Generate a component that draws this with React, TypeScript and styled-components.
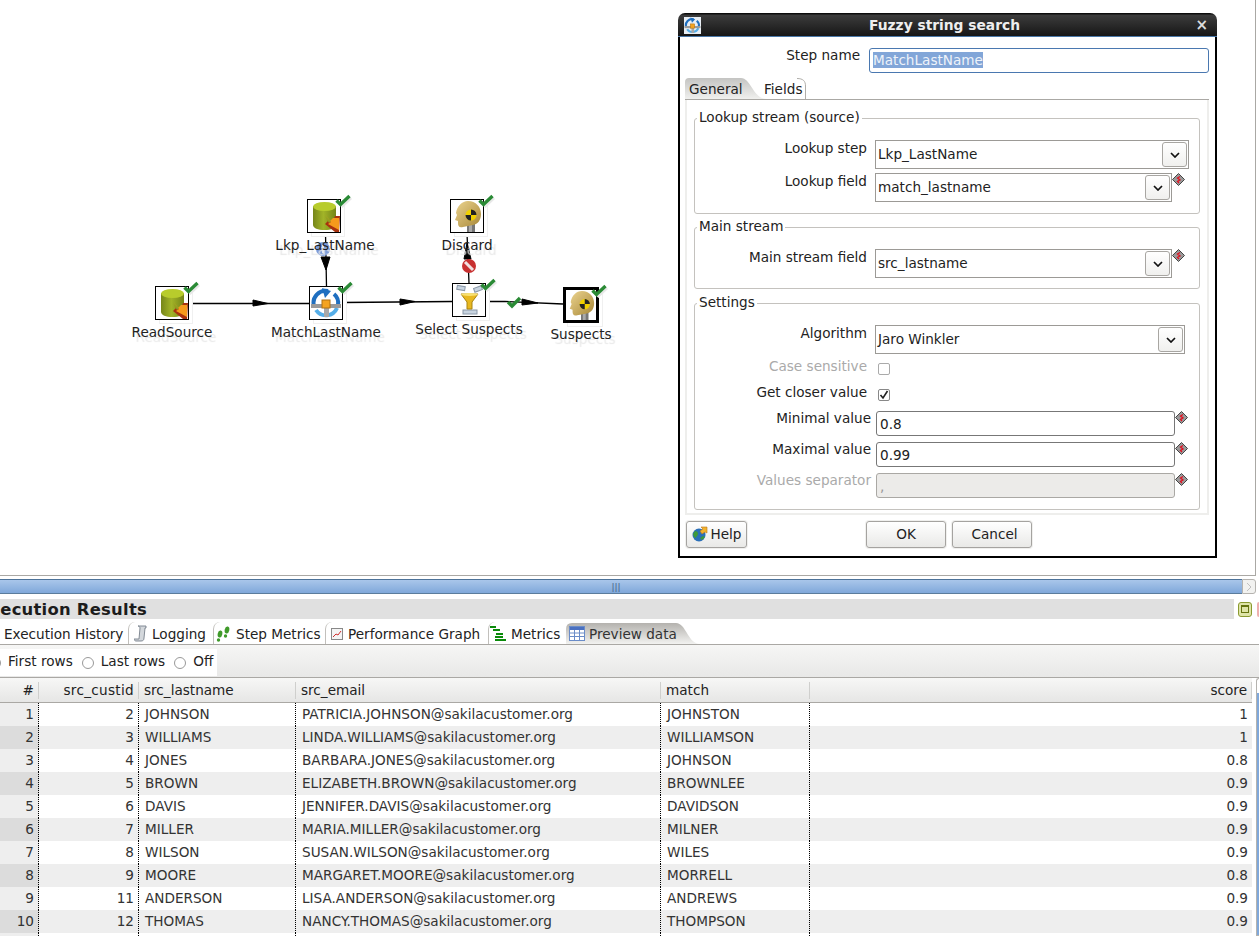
import React from "react";
import styled, { createGlobalStyle } from "styled-components";

const Global = createGlobalStyle`
  html, body { margin: 0; padding: 0; background: #fff; }
  body { font-family: "DejaVu Sans", sans-serif; font-size: 13.6px; color: #222; }
`;

const Page = styled.div`
  width: 1259px; height: 936px; overflow: hidden; display: flex; flex-direction: column; background: #fff;
`;

/* ---------- canvas ---------- */
const Canvas = styled.div`
  position: relative; width: 1256px; height: 576px; box-sizing: border-box; flex: none;
  border-right: 1px solid #aaa8a4; border-bottom: 1px solid #aaa8a4;
`;
const Wires = styled.svg`position: absolute; left: 0; top: 0;`;
const NodeBox = styled.div<{ $x: number; $y: number; $active?: boolean }>`
  position: absolute; left: ${p => p.$x}px; top: ${p => p.$y}px;
  width: ${p => (p.$active ? 36 : 34)}px; height: ${p => (p.$active ? 36 : 34)}px;
  box-sizing: border-box; border: ${p => (p.$active ? 3 : 1)}px solid #000; background: #fff;
  box-shadow: 4px 4px 0 -1px #fff, 4px 4px 0 0 #f0f0f0;
  display: flex; align-items: center; justify-content: center;
`;
const Tick = styled.svg`position: absolute; right: -10px; top: -5px; overflow: visible;`;
const NodeLabel = styled.div<{ $cx: number; $cy: number }>`
  position: absolute; left: ${p => p.$cx - 80}px; top: ${p => p.$cy - 9}px; width: 160px;
  text-align: center; line-height: 18px; color: #222; white-space: nowrap;
  text-shadow: 4px 5px 1px #e8e8e8;
`;

/* ---------- dialog ---------- */
const Dialog = styled.div`
  position: absolute; left: 678px; top: 13px; width: 539px; height: 545px; display: flex; flex-direction: column;
`;
const TitleBar = styled.div`
  height: 24px; flex: none; box-sizing: border-box; display: flex; align-items: center; justify-content: center;
  position: relative; border-radius: 7px 7px 0 0; color: #eee; font-weight: bold; font-size: 13.8px; padding: 0 6px 0 0;
  background: linear-gradient(#0c0c0c 0, #0c0c0c 1px, #3c3c3c 2px, #161616 100%);
  border-bottom: 1px solid #4a78a8;
`;
const TitleIcon = styled.span`
  position: absolute; left: 6px; top: 4px; width: 17px; height: 17px; background: #e8eef4; display: flex;
`;
const CloseMark = styled.span`
  position: absolute; right: 9px; top: 3px; color: #ddd; font-size: 15px; font-weight: bold; line-height: 18px;
`;
const DialogBody = styled.div`
  flex: 1; box-sizing: border-box; background: #fff; border: 2px solid #000; border-top: 0;
  padding: 10px 6px 0 5px; display: flex; flex-direction: column;
`;
const StepRow = styled.div`display: flex; gap: 9px; height: 31px;`;
const StepLabel = styled.div`width: 175px; text-align: right; line-height: 17px;`;
const StepInput = styled.div`
  width: 340px; height: 25px; margin-top: 1px; box-sizing: border-box; border: 1px solid #4a78b0; border-radius: 3px;
  padding: 3px 0 0 3px; line-height: 17px;
`;
const Selected = styled.span`background: #82a6d8; color: #eef3fa;`;
const TabStrip = styled.div`
  display: flex; height: 22px; box-sizing: border-box; border-bottom: 1px solid #aaa8a4; flex: none; width: 524px;
`;
const CurvedTab = styled.div<{ $w: number; $pad: number }>`
  position: relative; width: ${p => p.$w}px; padding-left: ${p => p.$pad}px; box-sizing: border-box;
  line-height: 23px; height: 21px; flex: none;
`;
const TabShape = styled.svg`position: absolute; left: 0; top: 0;`;
const TabText = styled.span`position: relative;`;
const TabPanel = styled.div`
  flex: 1; box-sizing: border-box; width: 524px; margin-bottom: 6px; border: 2px solid #eeeeec; border-top: 0;
  padding: 18px 7px 0 7px; display: flex; flex-direction: column;
`;
const Group = styled.div<{ $h: number; $gap: number }>`
  position: relative; height: ${p => p.$h}px; margin-bottom: ${p => p.$gap}px; flex: none; box-sizing: border-box;
  border: 1px solid #c4c2be; border-radius: 3px; padding: 21px 0 0 0;
`;
const Legend = styled.div`
  position: absolute; left: 2px; top: -10px; padding: 0 2px; background: #fff; line-height: 17px;
`;
const FieldRow = styled.div<{ $lw: number; $gap: number; $mb?: number }>`
  display: grid; grid-template-columns: ${p => p.$lw}px auto 1fr; column-gap: ${p => p.$gap}px;
  margin-bottom: ${p => p.$mb ?? 0}px; align-items: start;
`;
const FieldLabel = styled.div<{ $off?: boolean; $top?: number }>`
  text-align: right; line-height: 17px; color: ${p => (p.$off ? "#aaa" : "#222")}; margin-top: ${p => p.$top ?? 0}px;
`;
const Combo = styled.div<{ $w: number }>`
  width: ${p => p.$w}px; height: 29px; box-sizing: border-box; border: 1px solid #9c9a96;
  display: flex; align-items: center; justify-content: space-between; padding: 0 1px 0 2px;
`;
const ComboText = styled.span`margin-top: -2px;`;
const ComboButton = styled.div`
  width: 25px; height: 25px; box-sizing: border-box; border: 1px solid #a8a6a2; border-radius: 3px;
  background: linear-gradient(#fff, #f0f0ee); display: flex; align-items: center; justify-content: center;
`;
const Diamond = styled.svg<{ $ml: number }>`margin-left: ${p => p.$ml}px;`;
const CheckBox = styled.div`
  width: 12px; height: 12px; margin-top: 8px; border: 1px solid #aaa; border-radius: 2px; box-sizing: border-box;
  display: flex; align-items: center; justify-content: center;
`;
const CheckBoxOn = styled(CheckBox)`border-color: #888; margin-top: 5px;`;
const ValueInput = styled.div<{ $off?: boolean; $mb: number }>`
  width: 299px; height: 25px; box-sizing: border-box; border: 1px solid ${p => (p.$off ? "#aaa8a4" : "#777")};
  border-radius: 3px; padding: 3px 0 0 3px; line-height: 18px; margin-bottom: ${p => p.$mb}px;
  background: ${p => (p.$off ? "#ecebe9" : "#fff")}; color: ${p => (p.$off ? "#999" : "#222")};
`;
const ButtonBar = styled.div`display: flex; align-items: center; height: 27px; flex: none; margin-bottom: 8px;`;
const PushButton = styled.div<{ $w: number; $ml: number; $shift?: number }>`
  width: ${p => p.$w}px; margin-left: ${p => p.$ml}px; height: 27px; box-sizing: border-box; border: 1px solid #a5a3a0;
  border-radius: 3px; background: linear-gradient(#fff, #e9e9e7); display: flex; align-items: center; justify-content: center;
  gap: 3px; box-shadow: 0 0 0 1px #f0f0ee; padding: 0 0 2px ${p => p.$shift ?? 0}px;
`;

/* ---------- splitter ---------- */
const Splitter = styled.div`
  flex: none; margin-top: 3px; height: 15px; width: 1256px; display: flex;
`;
const SplitBar = styled.div`
  flex: 1; box-sizing: border-box; border-top: 1px solid #4d7299; border-bottom: 1px solid #5b7c9c;
  background: linear-gradient(#a9c6ea, #80a8da); display: flex; align-items: center; justify-content: center;
  color: #3f5f88; font-size: 9px; padding-right: 10px;
`;
const SplitEnd = styled.div`
  width: 14px; box-sizing: border-box; border: 1px solid #b5b3af; border-radius: 0 3px 3px 0; background: #f2f2f0;
  display: flex; align-items: center; justify-content: center;
`;

/* ---------- results ---------- */
const ResultsTitleRow = styled.div`
  flex: none; margin-top: 5px; height: 20px; display: flex; align-items: center;
`;
const ResultsTitle = styled.div`
  width: 1234px; height: 20px; background: #e0e0e0; overflow: hidden; font-weight: bold; font-size: 16.4px; letter-spacing: .25px;
  line-height: 21px; color: #1c1c1c; white-space: nowrap; text-indent: -22px; flex: none;
`;
const PanelButton = styled.div`
  width: 14px; height: 15px; margin-left: 4px; box-sizing: border-box; border: 1px solid #8a9a30; border-radius: 3px;
  background: #dfe5a8; display: flex; align-items: center; justify-content: center; flex: none;
`;
const PanelGlyph = styled.div`width: 8px; height: 8px; box-sizing: border-box; border: 1px solid #66740f; border-top-width: 2px;`;
const PanelRed = styled.div`
  width: 2px; height: 15px; margin-left: 5px; background: #eeb0b0; border-radius: 2px 0 0 2px; flex: none;
`;
const ViewTabs = styled.div`
  flex: none; height: 25px; display: flex; align-items: flex-end; border-bottom: 1px solid #aaa8a4; box-sizing: content-box;
`;
const ViewTab = styled.div<{ $w: number; $pad: number; $first?: boolean }>`
  position: relative; width: ${p => p.$w}px; flex: none; height: 22px; box-sizing: border-box;
  padding: 1px 0 0 ${p => p.$pad}px; display: flex; align-items: center; gap: 5px; white-space: nowrap;
  border-left: ${p => (p.$first ? "0" : "1px solid #c2c0bc")}; border-top-left-radius: 7px;
`;
const ActiveShape = styled.svg`position: absolute; left: 0; bottom: 0;`;
const ActiveInner = styled.span`position: relative; display: flex; align-items: center; gap: 4px; color: #333;`;
const Toolbar = styled.div`
  flex: none; height: 32px; box-sizing: border-box; background: linear-gradient(#f6f6f5, #e8e8e7); padding-top: 4px;
`;
const RadioBox = styled.div`
  width: 217px; height: 27px; background: #fff; display: flex; align-items: center; overflow: hidden;
`;
const Radio = styled.span<{ $ml: number }>`
  width: 12px; height: 12px; flex: none; box-sizing: border-box; border: 1px solid #999; border-radius: 50%;
  margin-left: ${p => p.$ml}px; margin-right: 7px;
`;
const RadioText = styled.span`line-height: 15px; white-space: nowrap; margin-top: -2px;`;
const TableArea = styled.div`flex: 1; display: flex; min-height: 0; border-top: 1px solid #aaa8a4;`;
const Table = styled.div`width: 1252px; flex: none; display: flex; flex-direction: column;`;
const Columns = "39px 100px 157px 365px 149px 442px";
const HeadRow = styled.div`
  display: grid; grid-template-columns: ${Columns}; height: 25px; box-sizing: border-box; border-bottom: 1px solid #aaa8a4;
  background: linear-gradient(#f7f7f6, #e6e6e5);
`;
const HeadCell = styled.div<{ $right?: boolean; $track?: number }>`
  position: relative; text-align: ${p => (p.$right ? "right" : "left")}; line-height: 25px; color: #222;
  padding: ${p => (p.$right ? "0 5px 0 0" : "0 0 0 5px")}; letter-spacing: ${p => p.$track ?? 0}px;
  &::after { content: ""; position: absolute; right: 0; top: 4px; bottom: 4px; width: 1px; background: #cfcfcd; }
`;
const BodyRow = styled.div<{ $alt: boolean }>`
  display: grid; grid-template-columns: ${Columns}; height: 23px; background: ${p => (p.$alt ? "#eeeeee" : "#fff")};
`;
const Cell = styled.div<{ $right?: boolean; $last?: boolean; $bg?: string }>`
  box-sizing: border-box; line-height: 23px; text-align: ${p => (p.$right ? "right" : "left")}; color: #333;
  padding: ${p => (p.$right ? "0 4px 0 0" : "0 0 0 6px")}; white-space: nowrap; overflow: hidden;
  border-right: ${p => (p.$last ? "0" : "1px dotted #000")};
  ${p => (p.$bg ? `background: ${p.$bg};` : "")}
`;
const VScroll = styled.div`
  width: 3px; margin-left: 4px; flex: none; border: 1px solid #b5b3af; border-right: 0; border-radius: 3px 0 0 0; box-sizing: border-box;
  background: linear-gradient(#fff 0, #fff 14px, #80a8da 14px);
`;

/* ---------- drawings ---------- */
const Db = () => (
  <svg width="32" height="32" viewBox="0 0 32 32">
    <defs>
      <linearGradient id="dbb" x1="0" x2="1" y1="0" y2="0">
        <stop offset="0" stopColor="#76861a" /><stop offset=".45" stopColor="#a2b428" /><stop offset="1" stopColor="#748418" />
      </linearGradient>
    </defs>
    <path d="M5 6v19c0 3 5 5 11.500 5S28 28 28 25V6z" fill="url(#dbb)" />
    <ellipse cx="16.500" cy="6.500" rx="11.500" ry="4.500" fill="#b8cc2c" />
    <path d="M17 16l4 7 3-2 1 1 2-6 5 0-1 17-4-1-10-8 3-3z" fill="#a8320f" />
    <path d="M17 14l5 7 3-3 6 0 0 12-11-6 3-2z" fill="#f59a1c" />
  </svg>
);
const Head = () => (
  <svg width="32" height="32" viewBox="0 0 32 32">
    <defs>
      <linearGradient id="hd" x1="0" x2="1" y1="0" y2="1">
        <stop offset="0" stopColor="#ecd490" /><stop offset="1" stopColor="#a88838" />
      </linearGradient>
    </defs>
    <rect x="16" y="23" width="8" height="9" fill="#777" />
    <rect x="18" y="23" width="3" height="9" fill="#aaa" />
    <path d="M17 1C25 1 30 7 30 14C30 20 27 24 22 25L12 27C8 28 7 26 7 23L7 21L4 20L6 15L5 13C6 6 11 1 17 1z" fill="url(#hd)" />
    <circle cx="20" cy="15" r="5.500" fill="#f0d000" />
    <path d="M20 15V9.500A5.500 5.500 0 0 1 25.500 15zM20 15v5.500A5.500 5.500 0 0 1 14.500 15z" fill="#222" />
  </svg>
);
const Fuzzy = ({ size = 32 }: { size?: number }) => (
  <svg width={size} height={size} viewBox="0 0 32 32">
    <path d="M4 19A12 12 0 0 1 18 4" fill="none" stroke="#1f6fc0" strokeWidth="4" />
    <path d="M12 1l9 3-6 7z" fill="#1f6fc0" />
    <path d="M24 7A12 12 0 0 1 28 18" fill="none" stroke="#1f6fc0" strokeWidth="4" />
    <path d="M27 21A12 12 0 0 1 6 23" fill="none" stroke="#55aee8" strokeWidth="4" />
    <rect x="1" y="17" width="30" height="4" fill="#9a9a9a" />
    <rect x="14" y="20" width="5" height="10" fill="#a8a8a8" />
    <rect x="12" y="13" width="8" height="8" fill="#f4a320" stroke="#b07010" />
  </svg>
);
const Filter = () => (
  <svg width="32" height="32" viewBox="0 0 32 32">
    <rect x="4" y="2" width="8" height="4" transform="rotate(10 8 4)" fill="#c8d4e0" stroke="#8a98a8" />
    <rect x="21" y="3" width="8" height="4" transform="rotate(-20 25 5)" fill="#c8d4e0" stroke="#8a98a8" />
    <rect x="10" y="26" width="14" height="4" fill="#c8d4e0" stroke="#8a98a8" />
    <path d="M8 10h17l-6 8v7h-5v-7z" fill="#e8b820" stroke="#a88310" />
    <ellipse cx="16.500" cy="10.500" rx="8.500" ry="1.500" fill="#f8e070" />
  </svg>
);
const Check = () => (
  <Tick width="14" height="11" viewBox="0 0 14 11">
    <path d="M1 5.500l3.500 3.500L13 1" transform="translate(2 2)" fill="none" stroke="#e8e8e8" strokeWidth="3" />
    <path d="M.5 5.500l4 4L13.500 1" fill="none" stroke="#2a8a35" strokeWidth="3.400" />
  </Tick>
);
const Chevron = () => (
  <svg width="10" height="6" viewBox="0 0 10 6"><path d="M1 1l4 4 4-4" fill="none" stroke="#111" strokeWidth="1.700" /></svg>
);
const Warn = ({ ml }: { ml: number }) => (
  <Diamond $ml={ml} width="13" height="13" viewBox="0 0 13 13">
    <path d="M6.500 .5L12.500 6.500L6.500 12.500L.5 6.500z" fill="#9a9a9a" stroke="#444" strokeWidth="1" />
    <path d="M8 3.500L5.500 5l2.500 2-2.500 1.500L7 10" fill="none" stroke="#e01020" strokeWidth="1.300" />
  </Diamond>
);
const HelpGlobe = () => (
  <svg width="16" height="16" viewBox="0 0 16 16">
    <circle cx="7" cy="9" r="6.500" fill="#2a6fb8" />
    <path d="M3 5c2 0 3 1 3 3s-2 2-2 4l-2-1-1-3zM8 12l3-2 2 1-3 3z" fill="#3e9a3a" />
    <path d="M9 1h6v6l-2-1-3 2-2-3 3-2z" fill="#f2b22c" stroke="#b8761a" strokeWidth=".6" />
  </svg>
);
const ScrollIcon = () => (
  <svg width="13" height="17" viewBox="0 0 13 17">
    <path d="M4 1h8v2l-1 0-1 10c0 2-1 3-3 3H2c-1 0-2-1-2-2h5l1-11c0-1-1-2-2-2z" fill="#d4d8dc" stroke="#77808a" strokeWidth=".9" />
  </svg>
);
const Steps = () => (
  <svg width="15" height="16" viewBox="0 0 15 16">
    <ellipse cx="4" cy="8" rx="2.300" ry="3.500" fill="#3f9a2a" transform="rotate(12 4 8)" />
    <ellipse cx="2.500" cy="14" rx="1.700" ry="1.800" fill="#3f9a2a" />
    <ellipse cx="11" cy="4" rx="2.300" ry="3.500" fill="#3f9a2a" transform="rotate(12 11 4)" />
    <ellipse cx="9.500" cy="10" rx="1.700" ry="1.800" fill="#3f9a2a" />
  </svg>
);
const Perf = () => (
  <svg width="12" height="12" viewBox="0 0 12 12">
    <rect x=".5" y=".5" width="11" height="11" fill="#f4f4f4" stroke="#888" />
    <path d="M2 9l3-3 2 1 3-4" fill="none" stroke="#d03030" />
  </svg>
);
const MetricsIcon = () => (
  <svg width="16" height="15" viewBox="0 0 16 15" fill="#0a8a0a">
    <rect x="0" y="0" width="6" height="2" /><rect x="3" y="3" width="7" height="2" />
    <rect x="6" y="7" width="7" height="2" /><rect x="5" y="10" width="8" height="2" /><rect x="5" y="13" width="11" height="2" />
  </svg>
);
const Grid = () => (
  <svg width="16" height="15" viewBox="0 0 16 15">
    <rect x=".5" y=".5" width="15" height="14" fill="#fff" stroke="#6a8cc8" />
    <rect x="1" y="1" width="14" height="3" fill="#4a70c0" />
    <path d="M1 7h14M1 10.500h14M5.500 4v10M10.500 4v10" stroke="#6a8cc8" fill="none" />
  </svg>
);

/* ---------- data ---------- */
const rows: [number, number, string, string, string, string][] = [
  [1, 2, "JOHNSON", "PATRICIA.JOHNSON@sakilacustomer.org", "JOHNSTON", "1"],
  [2, 3, "WILLIAMS", "LINDA.WILLIAMS@sakilacustomer.org", "WILLIAMSON", "1"],
  [3, 4, "JONES", "BARBARA.JONES@sakilacustomer.org", "JOHNSON", "0.8"],
  [4, 5, "BROWN", "ELIZABETH.BROWN@sakilacustomer.org", "BROWNLEE", "0.9"],
  [5, 6, "DAVIS", "JENNIFER.DAVIS@sakilacustomer.org", "DAVIDSON", "0.9"],
  [6, 7, "MILLER", "MARIA.MILLER@sakilacustomer.org", "MILNER", "0.9"],
  [7, 8, "WILSON", "SUSAN.WILSON@sakilacustomer.org", "WILES", "0.9"],
  [8, 9, "MOORE", "MARGARET.MOORE@sakilacustomer.org", "MORRELL", "0.8"],
  [9, 11, "ANDERSON", "LISA.ANDERSON@sakilacustomer.org", "ANDREWS", "0.9"],
  [10, 12, "THOMAS", "NANCY.THOMAS@sakilacustomer.org", "THOMPSON", "0.9"],
];

export default function App() {
  return (
    <Page>
      <Global />
      <Canvas>
        <Wires width="1255" height="575" viewBox="0 0 1255 575">
          <path d="M189 303.500H309M343 302.500L452 301.500M486 301.500H505L563 304M325.500 233L326.500 286M469 283L467 233" fill="none" stroke="#000" strokeWidth="1.300" />
          <path d="M253 300L268 303.500L253 306z" fill="#000" stroke="#000" />
          <path d="M400 299L415 301.500L400 305z" fill="#000" stroke="#000" />
          <path d="M522 299L538 303L522 305z" fill="#000" stroke="#000" />
          <path d="M321 257H330L326 270z" fill="#000" stroke="#000" />
          <path d="M464 259H471L467 243z" fill="#000" stroke="#000" />
          <circle cx="323" cy="249" r="7" fill="#7a9ad8" />
          <rect x="322" y="245" width="2" height="8" fill="#dfe8f8" />
          <circle cx="469" cy="266" r="7" fill="#c83030" />
          <path d="M465 262l8 8" stroke="#f0e0e0" strokeWidth="3" />
          <path d="M508 302l4 4 8-8" fill="none" stroke="#2a8a35" strokeWidth="3.400" />
        </Wires>
        <NodeBox $x={155} $y={286}><Db /><Check /></NodeBox>
        <NodeLabel $cx={172} $cy={332}>ReadSource</NodeLabel>
        <NodeBox $x={307} $y={199}><Db /><Check /></NodeBox>
        <NodeLabel $cx={325} $cy={245}>Lkp_LastName</NodeLabel>
        <NodeBox $x={309} $y={286}><Fuzzy /><Check /></NodeBox>
        <NodeLabel $cx={326} $cy={332}>MatchLastName</NodeLabel>
        <NodeBox $x={450} $y={199}><Head /><Check /></NodeBox>
        <NodeLabel $cx={467} $cy={245}>Discard</NodeLabel>
        <NodeBox $x={452} $y={283}><Filter /><Check /></NodeBox>
        <NodeLabel $cx={469} $cy={329}>Select Suspects</NodeLabel>
        <NodeBox $x={563} $y={287} $active><Head /><Check /></NodeBox>
        <NodeLabel $cx={581} $cy={334}>Suspects</NodeLabel>

        <Dialog>
          <TitleBar>
            <TitleIcon><Fuzzy size={17} /></TitleIcon>
            Fuzzy string search
            <CloseMark>×</CloseMark>
          </TitleBar>
          <DialogBody>
            <StepRow>
              <StepLabel>Step name</StepLabel>
              <StepInput><Selected>MatchLastName</Selected></StepInput>
            </StepRow>
            <TabStrip>
              <CurvedTab $w={79} $pad={4}>
                <TabShape width="82" height="21" viewBox="0 0 82 21">
                  <defs><linearGradient id="gt" x1="0" x2="0" y1="0" y2="1"><stop offset="0" stopColor="#c4c4c2" /><stop offset="1" stopColor="#f0f0ee" /></linearGradient></defs>
                  <path d="M0 21V4Q0 0 4 0H56C66 0 68 21 82 21z" fill="url(#gt)" />
                </TabShape>
                <TabText>General</TabText>
              </CurvedTab>
              <CurvedTab $w={42} $pad={0}>
                <TabShape width="42" height="21" viewBox="0 0 42 21">
                  <path d="M33 .5C39 .5 41.500 3 41.500 8V21" fill="none" stroke="#b0aeaa" />
                </TabShape>
                <TabText>Fields</TabText>
              </CurvedTab>
            </TabStrip>
            <TabPanel>
              <Group $h={96} $gap={13}>
                <Legend>Lookup stream (source)</Legend>
                <FieldRow $lw={172} $gap={8} $mb={4}>
                  <FieldLabel>Lookup step</FieldLabel>
                  <Combo $w={314}><ComboText>Lkp_LastName</ComboText><ComboButton><Chevron /></ComboButton></Combo>
                </FieldRow>
                <FieldRow $lw={172} $gap={8}>
                  <FieldLabel>Lookup field</FieldLabel>
                  <Combo $w={297}><ComboText>match_lastname</ComboText><ComboButton><Chevron /></ComboButton></Combo>
                  <Warn ml={-8} />
                </FieldRow>
              </Group>
              <Group $h={62} $gap={14}>
                <Legend>Main stream</Legend>
                <FieldRow $lw={172} $gap={8}>
                  <FieldLabel>Main stream field</FieldLabel>
                  <Combo $w={297}><ComboText>src_lastname</ComboText><ComboButton><Chevron /></ComboButton></Combo>
                  <Warn ml={-8} />
                </FieldRow>
              </Group>
              <Group $h={207} $gap={0}>
                <Legend>Settings</Legend>
                <FieldRow $lw={172} $gap={8} $mb={1}>
                  <FieldLabel>Algorithm</FieldLabel>
                  <Combo $w={310}><ComboText>Jaro Winkler</ComboText><ComboButton><Chevron /></ComboButton></Combo>
                </FieldRow>
                <FieldRow $lw={172} $gap={11} $mb={9}>
                  <FieldLabel $off $top={3}>Case sensitive</FieldLabel>
                  <CheckBox />
                </FieldRow>
                <FieldRow $lw={172} $gap={11} $mb={10}>
                  <FieldLabel>Get closer value</FieldLabel>
                  <CheckBoxOn>
                    <svg width="10" height="10" viewBox="0 0 10 10"><path d="M1.500 5l2.500 3 4.500-7" fill="none" stroke="#222" strokeWidth="1.600" /></svg>
                  </CheckBoxOn>
                </FieldRow>
                <FieldRow $lw={176} $gap={5}>
                  <FieldLabel $top={-1}>Minimal value</FieldLabel>
                  <ValueInput $mb={6}>0.8</ValueInput>
                  <Warn ml={-5} />
                </FieldRow>
                <FieldRow $lw={176} $gap={5}>
                  <FieldLabel $top={-1}>Maximal value</FieldLabel>
                  <ValueInput $mb={6}>0.99</ValueInput>
                  <Warn ml={-5} />
                </FieldRow>
                <FieldRow $lw={176} $gap={5}>
                  <FieldLabel $off $top={-1}>Values separator</FieldLabel>
                  <ValueInput $off $mb={0}>,</ValueInput>
                  <Warn ml={-5} />
                </FieldRow>
              </Group>
            </TabPanel>
            <ButtonBar>
              <PushButton $w={61} $ml={1}><HelpGlobe />Help</PushButton>
              <PushButton $w={80} $ml={119}>OK</PushButton>
              <PushButton $w={80} $ml={6} $shift={5}>Cancel</PushButton>
            </ButtonBar>
          </DialogBody>
        </Dialog>
      </Canvas>

      <Splitter>
        <SplitBar>|||</SplitBar>
        <SplitEnd>
          <svg width="6" height="10" viewBox="0 0 6 10"><path d="M1 1l4 4-4 4" fill="none" stroke="#c0c0c0" /></svg>
        </SplitEnd>
      </Splitter>

      <ResultsTitleRow>
        <ResultsTitle>Execution Results</ResultsTitle>
        <PanelButton><PanelGlyph /></PanelButton>
        <PanelRed />
      </ResultsTitleRow>

      <ViewTabs>
        <ViewTab $first $w={128} $pad={4}>Execution History</ViewTab>
        <ViewTab $w={85} $pad={5}><ScrollIcon />Logging</ViewTab>
        <ViewTab $w={112} $pad={2}><Steps />Step Metrics</ViewTab>
        <ViewTab $w={163} $pad={5}><Perf /><span>Performance Graph</span></ViewTab>
        <ViewTab $w={78} $pad={1}><MetricsIcon />Metrics</ViewTab>
        <ViewTab $first $w={134} $pad={3}>
          <ActiveShape width="134" height="21" viewBox="0 0 134 21">
            <defs><linearGradient id="pv" x1="0" x2="0" y1="0" y2="1"><stop offset="0" stopColor="#b4b2ae" /><stop offset="1" stopColor="#f2f2f0" /></linearGradient></defs>
            <path d="M0 21V6Q0 0 6 0H110C120 0 122 21 134 21z" fill="url(#pv)" />
          </ActiveShape>
          <ActiveInner><Grid />Preview data</ActiveInner>
        </ViewTab>
      </ViewTabs>

      <Toolbar>
        <RadioBox>
          <Radio $ml={-11} />
          <RadioText>First rows</RadioText>
          <Radio $ml={9} />
          <RadioText>Last rows</RadioText>
          <Radio $ml={9} />
          <RadioText>Off</RadioText>
        </RadioBox>
      </Toolbar>

      <TableArea>
        <Table>
          <HeadRow>
            <HeadCell $right>#</HeadCell>
            <HeadCell $right $track={0.3}>src_custid</HeadCell>
            <HeadCell>src_lastname</HeadCell>
            <HeadCell>src_email</HeadCell>
            <HeadCell>match</HeadCell>
            <HeadCell $right>score</HeadCell>
          </HeadRow>
          {rows.map(r => (
            <BodyRow key={r[0]} $alt={r[0] % 2 === 0}>
              <Cell $right $bg={r[0] % 2 === 0 ? "#dcdcdc" : "#eeeeee"}>{r[0]}</Cell>
              <Cell $right>{r[1]}</Cell>
              <Cell>{r[2]}</Cell>
              <Cell>{r[3]}</Cell>
              <Cell>{r[4]}</Cell>
              <Cell $right $last>{r[5]}</Cell>
            </BodyRow>
          ))}
          <BodyRow $alt={false}>
            <Cell $right $bg="#eeeeee" />
            <Cell /><Cell /><Cell /><Cell /><Cell $last />
          </BodyRow>
        </Table>
        <VScroll />
      </TableArea>
    </Page>
  );
}
